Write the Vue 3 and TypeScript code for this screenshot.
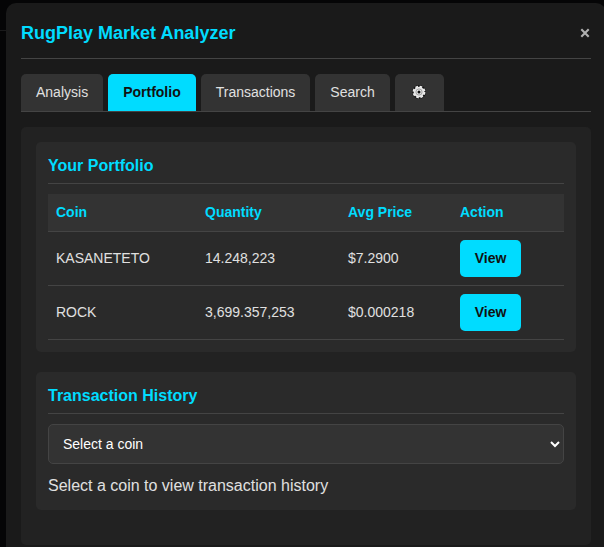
<script setup lang="ts">
import { ref } from 'vue'

interface Holding {
  coin: string
  quantity: string
  price: string
}

const tabs: string[] = ['Analysis', 'Portfolio', 'Transactions', 'Search']
const activeTab = ref<string>('Portfolio')
const selectedCoin = ref<string>('')

const holdings: Holding[] = [
  { coin: 'KASANETETO', quantity: '14.248,223', price: '$7.2900' },
  { coin: 'ROCK', quantity: '3,699.357,253', price: '$0.000218' },
]
</script>

<template>
  <div class="page">
    <main class="panel">
      <header class="header">
        <h1 class="title">RugPlay Market Analyzer</h1>
        <button class="close" aria-label="Close">
          <svg width="10" height="10" viewBox="0 0 10 10">
            <path d="M1.3 1.3 8.7 8.7M8.7 1.3 1.3 8.7" stroke="#b0b0b0" stroke-width="2.1" fill="none" />
          </svg>
        </button>
      </header>

      <nav class="tabs">
        <button
          v-for="tab in tabs"
          :key="tab"
          class="tab"
          :class="{ active: tab === activeTab }"
          @click="activeTab = tab"
        >{{ tab }}</button>
        <button class="tab gear" aria-label="Settings">
          <svg width="16" height="16" viewBox="0 0 16 16">
            <circle cx="8" cy="8" r="6.9" fill="#171717" />
            <circle cx="8" cy="8" r="5.3" fill="none" stroke="#ededed" stroke-width="2.2" stroke-dasharray="2.5 1.663" />
            <circle cx="8" cy="8" r="5.3" fill="#e6e6e6" />
            <circle cx="8" cy="8" r="3.1" fill="none" stroke="#a0a0a0" stroke-width="1" />
            <circle cx="8" cy="8" r="1.5" fill="#111" />
          </svg>
        </button>
      </nav>

      <div class="content">
        <section class="card">
          <h2 class="card-title">Your Portfolio</h2>
          <table class="table">
            <colgroup>
              <col class="c-coin" /><col class="c-qty" /><col class="c-price" /><col class="c-action" />
            </colgroup>
            <thead>
              <tr><th>Coin</th><th>Quantity</th><th>Avg Price</th><th>Action</th></tr>
            </thead>
            <tbody>
              <tr v-for="h in holdings" :key="h.coin">
                <td>{{ h.coin }}</td>
                <td>{{ h.quantity }}</td>
                <td>{{ h.price }}</td>
                <td class="action"><button class="view" @click="selectedCoin = h.coin">View</button></td>
              </tr>
            </tbody>
          </table>
        </section>

        <section class="card">
          <h2 class="card-title">Transaction History</h2>
          <select v-model="selectedCoin" class="select">
            <option value="">Select a coin</option>
            <option v-for="h in holdings" :key="h.coin" :value="h.coin">{{ h.coin }}</option>
          </select>
          <p class="hint">Select a coin to view transaction history</p>
        </section>
      </div>
    </main>
  </div>
</template>

<style>
body {
  background: #050506;
  overflow: hidden;
}
</style>

<style scoped>
.page {
  box-sizing: border-box;
  height: 547px;
  padding: 3px 0 0 6px;
  overflow: hidden;
  background: linear-gradient(#1a1a1b, #1a1a1b) 0 30px / 6px 1px no-repeat, #050506;
  font-family: "Liberation Sans", Arial, sans-serif;
  color: #e0e0e0;
}
.panel {
  box-sizing: border-box;
  width: 600px;
  height: 560px;
  padding: 15px;
  border-radius: 10px;
  background: #1a1a1a;
}
.header {
  box-sizing: border-box;
  display: flex;
  align-items: flex-start;
  justify-content: space-between;
  height: 41px;
  border-bottom: 1px solid #444;
}
.title {
  margin: 0;
  font-size: 18px;
  line-height: 30px;
  color: #00dcff;
}
button {
  font-family: inherit;
  border: 0;
  margin: 0;
}
.close {
  display: flex;
  padding: 10px 1px 0 0;
  background: none;
}
.tabs {
  display: flex;
  gap: 5px;
  margin-top: 15px;
  border-bottom: 1px solid #444;
}
.tab {
  height: 37px;
  padding: 0 15px 2px;
  border-radius: 5px 5px 0 0;
  background: #333;
  color: #e0e0e0;
  font-size: 14px;
}
.tab.active {
  background: #00dcff;
  color: #111;
  font-weight: bold;
}
.gear {
  display: flex;
  align-items: center;
  justify-content: center;
  width: 49px;
  padding: 0 15px 1px;
}
.gear svg {
  flex: none;
}
.content {
  box-sizing: border-box;
  display: flex;
  flex-direction: column;
  gap: 20px;
  height: 418px;
  margin-top: 15px;
  padding: 15px;
  border-radius: 5px;
  background: #222;
}
.card {
  box-sizing: border-box;
  padding: 12px;
  border-radius: 5px;
  background: #2a2a2a;
}
.card-title {
  box-sizing: border-box;
  height: 30px;
  margin: 0 0 10px;
  border-bottom: 1px solid #444;
  font-size: 16px;
  line-height: 23px;
  color: #00dcff;
}
.table {
  width: 100%;
  table-layout: fixed;
  border-collapse: separate;
  border-spacing: 0;
  font-size: 14px;
}
.c-coin { width: 149px; }
.c-qty { width: 143px; }
.c-price { width: 112px; }
.c-action { width: 112px; }
th,
td {
  box-sizing: border-box;
  padding: 0 8px 2px;
  text-align: left;
  vertical-align: middle;
  border-bottom: 1px solid #444;
}
th {
  height: 38px;
  background: #333;
  color: #00dcff;
}
td {
  height: 54px;
}
td.action {
  padding-bottom: 0;
}
.view {
  display: block;
  width: 61px;
  height: 37px;
  padding: 0 0 2px;
  border-radius: 5px;
  background: #00dcff;
  color: #111;
  font-size: 14px;
  font-weight: bold;
}
.select {
  box-sizing: border-box;
  display: block;
  width: 100%;
  height: 40px;
  padding: 0 0 0 10px;
  border: 1px solid #444;
  border-radius: 5px;
  background: #333;
  color: #fff;
  font-family: inherit;
  font-size: 14px;
}
.hint {
  margin: 10px 0 0;
  font-size: 16px;
  line-height: 24px;
}
</style>
